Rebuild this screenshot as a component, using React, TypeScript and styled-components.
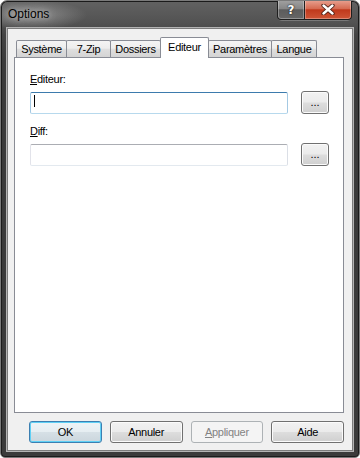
import React from 'react';
import styled, { createGlobalStyle, css } from 'styled-components';

const GlobalStyle = createGlobalStyle`
  html, body { margin: 0; padding: 0; background: #ffffff; }
  body {
    width: 360px; height: 458px; overflow: hidden;
    font-family: "Liberation Sans", Arial, sans-serif;
  }
  * { box-sizing: border-box; }
`;

const Window = styled.div`
  width: 360px;
  height: 458px;
  display: flex;
  flex-direction: column;
  border: 1px solid #7a7a7a;
  border-radius: 7px 7px 5px 5px;
  background:
    radial-gradient(ellipse 56px 15px at 30px 14px, rgba(190, 190, 190, 0.55), rgba(190, 190, 190, 0) 100%),
    linear-gradient(180deg, #626262 0px, #525252 22px, #434343 34px, #3b3b3b 60px, #3b3b3b 100%);
  box-shadow: inset 0 0 0 1px #1b1b1b;
  overflow: hidden;
`;

const TitleBar = styled.div`
  height: 27px;
  flex: none;
  display: flex;
  align-items: flex-start;
  justify-content: space-between;
  padding: 0 7px 0 7px;
`;

const Title = styled.span`
  margin-top: 6px;
  font-size: 12px;
  line-height: 15px;
  color: #000;
  text-shadow: 0 0 6px rgba(255, 255, 255, 0.55), 0 0 12px rgba(255, 255, 255, 0.35);
`;

const CaptionGroup = styled.div`
  display: flex;
  margin-top: -1px;
  height: 20px;
  box-shadow: 0 1px 0 rgba(255, 255, 255, 0.22);
  border-radius: 0 0 5px 5px;
`;

const CaptionButton = styled.div<{ $kind: 'help' | 'close' }>`
  height: 20px;
  display: flex;
  align-items: center;
  justify-content: center;
  border: 1px solid #1e1e1e;
  border-top: none;
  box-shadow: inset 0 0 0 1px rgba(255, 255, 255, 0.3);
  ${(p) =>
    p.$kind === 'help'
      ? css`
          width: 28px;
          border-radius: 0 0 0 4px;
          background: linear-gradient(180deg, #a2a2a2 0%, #878787 45%, #5c5c5c 52%, #666666 100%);
        `
      : css`
          width: 48px;
          margin-left: -1px;
          border-radius: 0 0 4px 0;
          background: linear-gradient(180deg, #e9a392 0%, #d66b52 45%, #c0391c 52%, #cf5536 100%);
        `}
`;

const HelpGlyph = styled.span`
  font-family: "DejaVu Sans", sans-serif;
  font-weight: bold;
  font-size: 12px;
  line-height: 12px;
  color: #ffffff;
  text-shadow: 0 0 2px #1a1a1a, 0 0 1px #1a1a1a;
`;

const Client = styled.div`
  flex: 1;
  margin: 0 6px 6px 6px;
  border: 1px solid #7c7c7c;
  box-shadow: 0 0 0 1px #b4b4b4;
  background: #f0f0f0;
  display: flex;
  flex-direction: column;
  padding: 8px 8px 7px 6px;
`;

const TabStrip = styled.div`
  height: 20px;
  flex: none;
  display: flex;
  align-items: flex-end;
  padding-left: 2px;
`;

const Tab = styled.div<{ $w: number; $active?: boolean }>`
  position: relative;
  width: ${(p) => p.$w}px;
  height: 17px;
  margin-left: -1px;
  &:first-child { margin-left: 0; }
  border: 1px solid #898c95;
  border-bottom: none;
  border-radius: 2px 2px 0 0;
  background: linear-gradient(180deg, #f4f4f4 0%, #ededed 45%, #dedede 52%, #d4d4d4 100%);
  display: flex;
  align-items: center;
  justify-content: center;
  font-size: 11px;
  line-height: 13px;
  letter-spacing: -0.3px;
  color: #000;
  white-space: nowrap;
  ${(p) =>
    p.$active &&
    css`
      height: 21px;
      margin-bottom: -1px;
      background: #ffffff;
      z-index: 1;
      padding-bottom: 1px;
    `}
`;

const Panel = styled.div`
  height: 356px;
  flex: none;
  border: 1px solid #898c95;
  background: #ffffff;
  padding: 15px 0 0 15px;
  display: flex;
  flex-direction: column;
  gap: 11px;
`;

const Field = styled.div`
  display: flex;
  flex-direction: column;
  gap: 6px;
`;

const Label = styled.div`
  font-size: 11px;
  line-height: 13px;
  letter-spacing: -0.3px;
  color: #000;
`;

const Mnemonic = styled.span`
  text-decoration: underline;
  text-underline-offset: 1px;
`;

const Row = styled.div`
  display: flex;
  align-items: flex-start;
  gap: 13px;
`;

const TextBox = styled.div<{ $focused?: boolean }>`
  width: 258px;
  height: 22px;
  background: #ffffff;
  border-radius: 2px;
  padding: 2px 0 0 3px;
  border: 1px solid;
  ${(p) =>
    p.$focused
      ? css`
          border-color: #3d7bad #a4c9e3 #b7d9ed #a4c9e3;
        `
      : css`
          border-color: #abadb3 #dbdfe6 #e3e9ef #e2e3ea;
        `}
`;

const Caret = styled.div`
  width: 1px;
  height: 12px;
  background: #000;
`;

const PushButton = styled.div<{ $w: number; $default?: boolean; $disabled?: boolean }>`
  width: ${(p) => p.$w}px;
  height: 22px;
  display: flex;
  align-items: center;
  justify-content: center;
  border: 1px solid #707070;
  border-radius: 3px;
  background: linear-gradient(180deg, #f2f2f2 0%, #ebebeb 48%, #dddddd 52%, #cfcfcf 100%);
  box-shadow: inset 0 0 0 1px #fbfbfb;
  font-size: 11px;
  line-height: 13px;
  letter-spacing: -0.3px;
  color: #000;
  ${(p) =>
    p.$default &&
    css`
      border-color: #3c7fb1;
      box-shadow: inset 0 0 0 1px #5fd0f5;
      background: linear-gradient(180deg, #eef4f7 0%, #e6eef2 48%, #d6e0e6 52%, #cbd6dd 100%);
    `}
  ${(p) =>
    p.$disabled &&
    css`
      border-color: #adb2b5;
      background: #f4f4f4;
      box-shadow: none;
      color: #838383;
    `}
`;

const BrowseButton = styled(PushButton)`
  height: 23px;
  margin-top: -1px;
  letter-spacing: 0;
`;

const ButtonRow = styled.div`
  display: flex;
  gap: 8px;
  margin-top: 8px;
  padding-left: 15px;
`;

const CloseIcon = () => (
  <svg width="14" height="11" viewBox="0 0 14 11">
    <path d="M2.5 1.5 L11.5 9.5 M11.5 1.5 L2.5 9.5" stroke="#4a1c12" strokeWidth="4.2" strokeLinecap="round" />
    <path d="M2.5 1.5 L11.5 9.5 M11.5 1.5 L2.5 9.5" stroke="#ffffff" strokeWidth="2.4" strokeLinecap="round" />
  </svg>
);

const tabs = [
  { label: 'Système', w: 51 },
  { label: '7-Zip', w: 45 },
  { label: 'Dossiers', w: 51 },
  { label: 'Editeur', w: 49, active: true },
  { label: 'Paramètres', w: 64 },
  { label: 'Langue', w: 46 },
];

export default function App() {
  return (
    <>
      <GlobalStyle />
      <Window>
        <TitleBar>
          <Title>Options</Title>
          <CaptionGroup>
            <CaptionButton $kind="help">
              <HelpGlyph>?</HelpGlyph>
            </CaptionButton>
            <CaptionButton $kind="close">
              <CloseIcon />
            </CaptionButton>
          </CaptionGroup>
        </TitleBar>
        <Client>
          <TabStrip>
            {tabs.map((t) => (
              <Tab key={t.label} $w={t.w} $active={t.active}>
                {t.label}
              </Tab>
            ))}
          </TabStrip>
          <Panel>
            <Field>
              <Label>
                <Mnemonic>E</Mnemonic>diteur:
              </Label>
              <Row>
                <TextBox $focused>
                  <Caret />
                </TextBox>
                <BrowseButton $w={28}>...</BrowseButton>
              </Row>
            </Field>
            <Field>
              <Label>
                <Mnemonic>D</Mnemonic>iff:
              </Label>
              <Row>
                <TextBox />
                <BrowseButton $w={28}>...</BrowseButton>
              </Row>
            </Field>
          </Panel>
          <ButtonRow>
            <PushButton $w={73} $default>
              OK
            </PushButton>
            <PushButton $w={73}>Annuler</PushButton>
            <PushButton $w={73} $disabled>
              <Mnemonic>A</Mnemonic>ppliquer
            </PushButton>
            <PushButton $w={73}>Aide</PushButton>
          </ButtonRow>
        </Client>
      </Window>
    </>
  );
}
